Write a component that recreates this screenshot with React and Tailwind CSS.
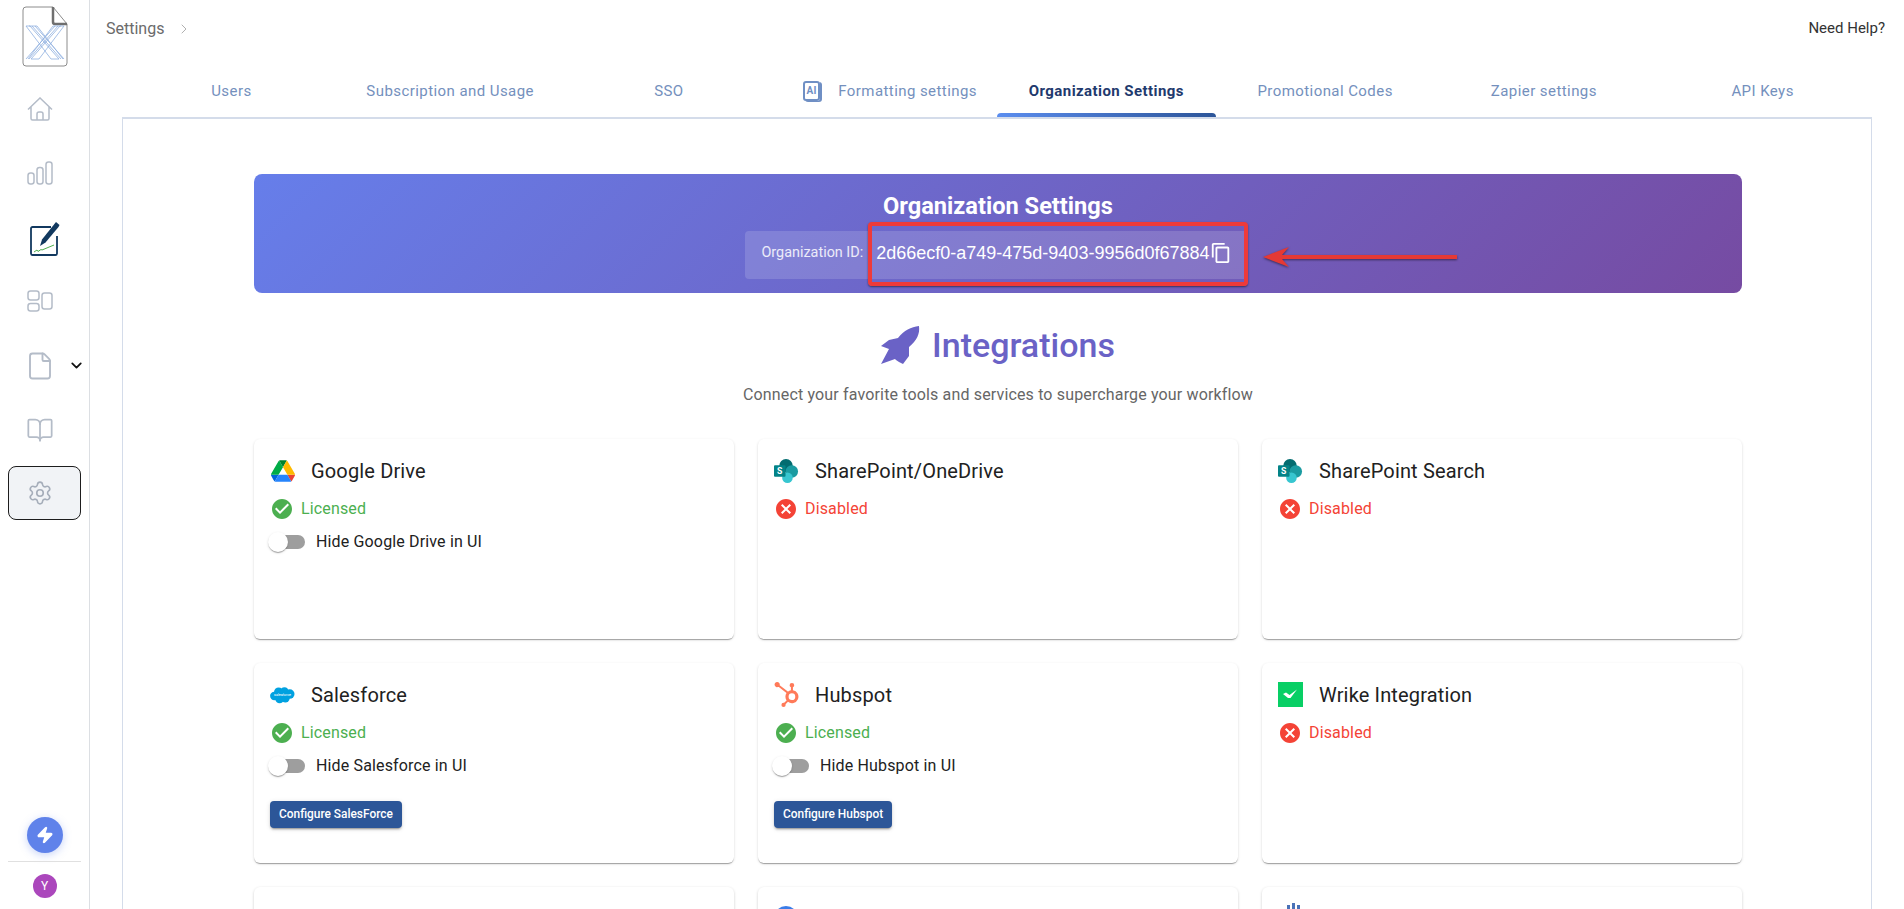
import React from 'react'
import { BookOpen, ChevronDown, ChevronRight, File, Settings, Zap } from 'lucide-react'
import { SiHubspot } from 'react-icons/si'
import { MdCancel, MdCheckCircle, MdContentCopy } from 'react-icons/md'

const tabs = [
  'Users',
  'Subscription and Usage',
  'SSO',
  'Formatting settings',
  'Organization Settings',
  'Promotional Codes',
  'Zapier settings',
  'API Keys',
]

// Logos
const DriveLogo = () => (
  <svg viewBox="0 0 87.3 78" className="w-[24px] h-[22px]">
    <path d="m6.6 66.85 3.85 6.65c.8 1.4 1.95 2.5 3.3 3.3l13.75-23.8h-27.5c0 1.55.4 3.1 1.2 4.5z" fill="#0066da" />
    <path d="m43.65 25-13.75-23.8c-1.35.8-2.5 1.9-3.3 3.3l-25.4 44a9.06 9.06 0 0 0 -1.2 4.5h27.5z" fill="#00ac47" />
    <path d="m73.55 76.8c1.35-.8 2.5-1.9 3.3-3.3l1.6-2.75 7.65-13.25c.8-1.4 1.2-2.95 1.2-4.5h-27.502l5.852 11.5z" fill="#ea4335" />
    <path d="m43.65 25 13.75-23.8c-1.35-.8-2.9-1.2-4.5-1.2h-18.5c-1.6 0-3.15.45-4.5 1.2z" fill="#00832d" />
    <path d="m59.8 53h-32.3l-13.75 23.8c1.35.8 2.9 1.2 4.5 1.2h50.8c1.6 0 3.15-.45 4.5-1.2z" fill="#2684fc" />
    <path d="m73.4 26.5-12.7-22c-.8-1.4-1.95-2.5-3.3-3.3l-13.75 23.8 16.15 28h27.45c0-1.55-.4-3.1-1.2-4.5z" fill="#ffba00" />
  </svg>
)

const SharePointLogo = () => (
  <svg viewBox="0 0 26 26" className="w-[26px] h-[26px]">
    <circle cx="12.5" cy="7.5" r="7" fill="#036c70" />
    <circle cx="18.5" cy="13.5" r="6.5" fill="#1a9ba1" />
    <circle cx="14" cy="20" r="5.5" fill="#37c6d0" />
    <rect x="0" y="7" width="12" height="12" rx="1" fill="#038387" />
    <text x="6" y="16.5" textAnchor="middle" fontSize="9" fontWeight="700" fill="#fff" fontFamily="Roboto, sans-serif">
      S
    </text>
  </svg>
)

const SalesforceLogo = () => (
  <svg viewBox="0 0 26 18" className="w-[26px] h-[18px]">
    <g fill="#00a1e0">
      <circle cx="9" cy="6" r="4.8" />
      <circle cx="15" cy="5" r="4" />
      <circle cx="20.5" cy="8" r="5" />
      <circle cx="4.5" cy="10" r="4.4" />
      <circle cx="10" cy="13" r="4.6" />
      <circle cx="16" cy="12.5" r="4.4" />
    </g>
    <text x="13" y="10.5" textAnchor="middle" fontSize="3.8" fill="#fff" fontFamily="Roboto, sans-serif">
      salesforce
    </text>
  </svg>
)

const WrikeLogo = () => (
  <svg viewBox="0 0 25 25" className="w-[25px] h-[25px]">
    <rect width="25" height="25" fill="#08cf65" />
    <path d="M5 12l3-1.500 3.500 2.500 7.500-5.500-6.500 8.500h-2.500z" fill="#fff" />
  </svg>
)

const RocketIcon = () => (
  <svg viewBox="0 0 40 38" className="w-[40px] h-[38px]">
    <path d="M38 0C30 1 23 4 17 12L8 14 0 20l8 3L0 38l14-5 1 1 3 2 4 2 6-8 0-9C36 14 39 8 38 0z" fill="#6a62c6" />
  </svg>
)

// Sidebar icons
const HomeIcon = () => (
  <svg viewBox="0 0 26 24" fill="none" stroke="#b4bcc8" strokeWidth="1.5" className="w-[26px] h-[24px]">
    <path d="M1 12.5 13 1l12 11.500M4 10v11.500a1.500 1.500 0 0 0 1.500 1.500h15a1.500 1.500 0 0 0 1.500-1.500V10" />
    <path d="M10 23v-6a2 2 0 0 1 2-2h2a2 2 0 0 1 2 2v6" />
  </svg>
)

const BarsIcon = () => (
  <svg viewBox="0 0 26 24" fill="none" stroke="#b4bcc8" strokeWidth="1.5" className="w-[26px] h-[24px]">
    <rect x="1" y="12" width="6" height="11" rx="2.500" />
    <rect x="10" y="6.500" width="6" height="16.500" rx="2.500" />
    <rect x="19" y="1" width="6" height="22" rx="2.500" />
  </svg>
)

const BlocksIcon = () => (
  <svg viewBox="0 0 26 22" fill="none" stroke="#b4bcc8" strokeWidth="1.5" className="w-[26px] h-[22px]">
    <rect x="1" y="1" width="11" height="9" rx="2.500" />
    <rect x="1" y="13.500" width="11" height="7.500" rx="2.500" />
    <rect x="15" y="3" width="10" height="16" rx="2.500" />
  </svg>
)

const SignIcon = () => (
  <svg viewBox="0 0 30 34" className="w-[30px] h-[34px]">
    <path d="M21 5H2.500A1.500 1.500 0 0 0 1 6.500v25A1.500 1.500 0 0 0 2.500 33h23a1.500 1.500 0 0 0 1.500-1.500V14" fill="none" stroke="#12395f" strokeWidth="1.800" />
    <path d="M26 0l3.500 3-1 2-13 15.500-5.500 3.500 2-6.500z" fill="#12395f" />
    <path d="M4 30l3-2 1 1.500 3-2 1 .5 12-5" fill="none" stroke="#4fb04f" strokeWidth="1" />
  </svg>
)

const BrandLogo = () => (
  <svg viewBox="0 0 46 62" className="w-[46px] h-[62px]">
    <path d="M4 1h27l14 17v39a3 3 0 0 1-3 3H4a3 3 0 0 1-3-3V4a3 3 0 0 1 3-3z" fill="#fff" stroke="#8c8c8c" strokeWidth="1" />
    <path d="M31 1v15a2 2 0 0 0 2 2h12" fill="none" stroke="#6f6f6f" strokeWidth="2.500" />
    <g stroke="#8fb0e0" strokeWidth="0.800" fill="none">
      <path d="M4 20h4l29 33M7 20h3l29 33M10 20h3l29 33M13 20h2l26 33M4 20l25 33h8" />
      <path d="M42 20h-4L9 53M39 20h-3L7 53M36 20h-3L4 53M33 20h-2L6 53M42 20 17 53H9" />
    </g>
  </svg>
)

const AiIcon = () => (
  <span className="flex items-center justify-center w-[17px] h-[20px] ml-[5px] mr-[18px] border-2 border-[#6f8fc4] rounded-[3px] shadow-[2px_1px_0_#6f8fc4] text-[10px] leading-none font-bold text-[#6f8fc4]">
    AI
  </span>
)

const Status = ({ licensed }) =>
  licensed ? (
    <div className="flex items-center h-[24px] mt-[11px] text-[16px] tracking-[0.15px] text-[#4caf50]">
      <MdCheckCircle size={24} className="mr-[7px]" />
      Licensed
    </div>
  ) : (
    <div className="flex items-center h-[24px] mt-[11px] text-[16px] tracking-[0.15px] text-[#f44336]">
      <MdCancel size={24} className="mr-[7px]" />
      Disabled
    </div>
  )

const HideToggle = ({ name }) => (
  <div className="flex items-center h-[24px] mt-[9px] text-[16px] tracking-[0.15px] text-[#212121]">
    <div className="relative w-[34px] h-[14px] ml-[1px] mr-[11px] rounded-full bg-[#9e9e9e]">
      <span className="absolute left-[-3px] top-[-3px] w-[20px] h-[20px] rounded-full bg-white shadow-[0_2px_1px_-1px_rgba(0,0,0,.2),0_1px_1px_0_rgba(0,0,0,.14),0_1px_3px_0_rgba(0,0,0,.12)]" />
    </div>
    Hide {name} in UI
  </div>
)

const Card = ({ icon, title, licensed, hideName, button }) => (
  <div className="h-[200px] px-4 pt-4 rounded-md bg-white shadow-[0_2px_1px_-1px_rgba(0,0,0,.2),0_1px_1px_0_rgba(0,0,0,.14),0_1px_3px_0_rgba(0,0,0,.12)]">
    <div className="flex items-center h-[31px]">
      <div className="flex items-center justify-center w-[25px] mr-[16px]">{icon}</div>
      <span className="text-[20px] tracking-[0.15px] text-[#212121]">{title}</span>
    </div>
    <Status licensed={licensed} />
    {hideName && <HideToggle name={hideName} />}
    {button && (
      <button className="flex items-center h-[27px] mt-[23px] px-[9px] rounded bg-[#2c5698] text-[11.900px] font-medium text-white shadow-[0_3px_1px_-2px_rgba(0,0,0,.2),0_2px_2px_0_rgba(0,0,0,.14),0_1px_5px_0_rgba(0,0,0,.12)]">
        {button}
      </button>
    )}
  </div>
)

const cards = [
  { title: 'Google Drive', icon: <DriveLogo />, licensed: true, hideName: 'Google Drive' },
  { title: 'SharePoint/OneDrive', icon: <SharePointLogo /> },
  { title: 'SharePoint Search', icon: <SharePointLogo /> },
  { title: 'Salesforce', icon: <SalesforceLogo />, licensed: true, hideName: 'Salesforce', button: 'Configure SalesForce' },
  { title: 'Hubspot', icon: <SiHubspot size={25} color="#ff7a59" />, licensed: true, hideName: 'Hubspot', button: 'Configure Hubspot' },
  { title: 'Wrike Integration', icon: <WrikeLogo /> },
]

const Sidebar = () => (
  <aside className="relative flex flex-col items-center w-[90px] h-full shrink-0 border-r border-[#dcdfe3] bg-white">
    <div className="mt-[6px]">
      <BrandLogo />
    </div>
    <div className="mt-[29px] ml-[-9px]"><HomeIcon /></div>
    <div className="mt-[40px] ml-[-9px]"><BarsIcon /></div>
    <div className="mt-[37px]"><SignIcon /></div>
    <div className="mt-[34px] ml-[-9px]"><BlocksIcon /></div>
    <div className="relative mt-[39px] ml-[-9px]">
      <File size={30} strokeWidth={1.500} color="#b4bcc8" />
      <ChevronDown size={17} strokeWidth={2.500} color="#111" className="absolute left-[43px] top-[6px]" />
    </div>
    <div className="mt-[35px] ml-[-9px]"><BookOpen size={28} strokeWidth={1.500} color="#b4bcc8" /></div>
    <div className="flex items-center justify-center w-[73px] h-[54px] mt-[22px] pr-[9px] rounded-lg border border-[#1d1d1d] bg-[#f1f3f6]">
      <Settings size={26} strokeWidth={1.500} color="#a6aeba" />
    </div>
    <div className="mt-auto flex flex-col items-center w-full">
      <div className="flex items-center justify-center w-[36px] h-[36px] rounded-full bg-[#5f82ea] shadow-[0_2px_8px_rgba(95,130,234,.35)]">
        <Zap size={18} fill="#fff" color="#fff" />
      </div>
      <div className="w-[73px] h-px mt-[8px] bg-[#e0e0e0]" />
      <div className="flex items-center justify-center w-[24px] h-[24px] mt-[12px] mb-[11px] rounded-full bg-[#ab47bc] text-[12px] text-white">
        Y
      </div>
    </div>
  </aside>
)

const App = () => {
  return (
    <div className="flex w-full h-screen overflow-hidden bg-white font-[Roboto,sans-serif]">
      <Sidebar />
      <main className="flex-1 min-w-0 flex flex-col px-8">
        {/* Header */}
        <div className="flex items-center justify-between h-[56px] ml-[-16px] mr-[-13px] pt-[1px]">
          <div className="flex items-center gap-[12px] text-[16px] text-[#6b6b6b]">
            Settings
            <ChevronRight size={16} strokeWidth={1} color="#888" />
          </div>
          <span className="text-[15px] text-[#333]">Need Help?</span>
        </div>

        {/* Tabs */}
        <div className="grid grid-cols-8 h-[61px]">
          {tabs.map(tab => (
            <div
              key={tab}
              className={
                tab === 'Organization Settings'
                  ? 'relative flex items-center justify-center pt-[9px] text-[15px] tracking-[0.43px] font-bold text-[#1f3a6e]'
                  : 'flex items-center justify-center pt-[9px] text-[15px] tracking-[0.43px] text-[#7490bd]'
              }
            >
              {tab === 'Formatting settings' && <AiIcon />}
              {tab}
              {tab === 'Organization Settings' && (
                <span className="absolute left-0 right-0 bottom-0 h-[4px] rounded-t bg-gradient-to-r from-[#5b8def] to-[#2c5599]" />
              )}
            </div>
          ))}
        </div>

        {/* Panel */}
        <div className="flex-1 min-h-0 border-t-2 border-x border-[#d4dcea]">
          <div className="relative w-[1488px] ml-[131px] pt-[55px]">
            <div className="relative flex flex-col items-center h-[119px] pt-[16px] rounded-lg bg-[linear-gradient(135deg,#667eea,#764ba2)] text-white">
              <h2 className="text-[23.600px] leading-[32px] font-bold">Organization Settings</h2>
              <div className="flex items-center h-[48px] mt-[9px] ml-[-3px] pl-[16px] pr-[16px] pb-[4px] rounded bg-white/15">
                <span className="mr-[13px] text-[14.400px] text-white/85">Organization ID:</span>
                <span className="font-['Liberation_Sans',sans-serif] text-[18px]">2d66ecf0-a749-475d-9403-9956d0f67884</span>
                <MdContentCopy size={22} />
              </div>

              {/* Red annotation over the id */}
              <div className="absolute left-[614px] top-[48px] w-[380px] h-[64px] rounded border-[4.500px] border-[#ee3a3a] shadow-[0_1px_2px_rgba(0,0,0,.5)]" />
              <svg viewBox="0 0 194 22" className="absolute left-[1009px] top-[72px] w-[194px] h-[22px] drop-shadow-[0_1px_1px_rgba(0,0,0,.5)]">
                <path d="M0 11 26 1l-7 8h175v4H19l7 8z" fill="#e53935" />
              </svg>
            </div>

            <div className="flex items-center justify-center h-[44px] mt-[30px]">
              <RocketIcon />
              <h3 className="ml-[11px] text-[34px] leading-none font-medium text-[#6a62c6]">Integrations</h3>
            </div>
            <p className="h-[24px] mt-[16px] text-center text-[16px] tracking-[0.15px] leading-[24px] text-[#666]">
              Connect your favorite tools and services to supercharge your workflow
            </p>

            <div className="grid grid-cols-3 gap-6 mt-[32px]">
              {cards.map(card => (
                <Card key={card.title} {...card} />
              ))}
              {/* Third row, cut off by the window */}
              <div className="h-[200px] rounded-md bg-white shadow-[0_1px_3px_rgba(0,0,0,.2)]" />
              <div className="h-[200px] pl-4 pt-[19px] rounded-md bg-white shadow-[0_1px_3px_rgba(0,0,0,.2)]">
                <div className="w-[24px] h-[24px] rounded-full bg-[#3b7de8]" />
              </div>
              <div className="h-[200px] pl-[25px] pt-[18px] rounded-md bg-white shadow-[0_1px_3px_rgba(0,0,0,.2)]">
                <div className="flex gap-[2px]">
                  <span className="w-[3px] h-[6px] bg-[#4a72b8]" />
                  <span className="w-[3px] h-[8px] mt-[-2px] bg-[#4a72b8]" />
                  <span className="w-[3px] h-[6px] bg-[#4a72b8]" />
                </div>
              </div>
            </div>
          </div>
        </div>
      </main>
    </div>
  )
}

export default App
